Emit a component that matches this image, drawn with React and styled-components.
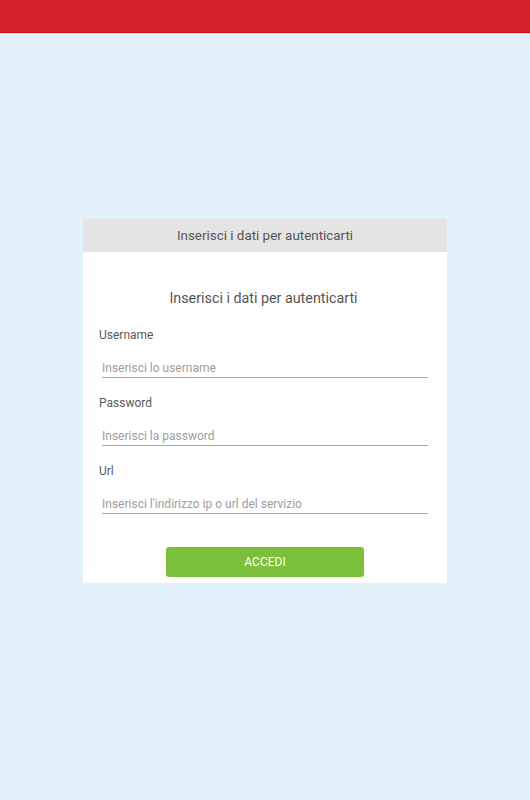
import React from "react";
import styled, { createGlobalStyle } from "styled-components";

const Global = createGlobalStyle`
  html, body { margin: 0; padding: 0; }
  body {
    background: #e3f1fb;
    font-family: Roboto, "Noto Sans", sans-serif;
  }
  * { box-sizing: border-box; }
`;

const Page = styled.div`
  min-height: 800px;
  display: flex;
  flex-direction: column;
`;

const TopBar = styled.header`
  height: 33px;
  background: #d52229;
  border-bottom: 1px solid #c80b10;
  box-shadow: 0 1px 0 #eee0e4;
`;

const Main = styled.main`
  display: flex;
  justify-content: center;
  padding-top: 186px;
`;

const Card = styled.section`
  width: 364px;
  background: #ffffff;
  display: flex;
  flex-direction: column;
`;

const CardHeader = styled.div`
  height: 33px;
  background: #e4e4e4;
  color: #555;
  font-size: 13.4px;
  display: flex;
  align-items: center;
  justify-content: center;
`;

const Form = styled.form`
  display: flex;
  flex-direction: column;
  padding: 37px 19px 6px 16px;
`;

const Title = styled.h2`
  margin: 0 0 21px;
  font-weight: 400;
  font-size: 14.3px;
  color: #555;
  text-align: center;
  line-height: 18px;
`;

const Field = styled.div`
  display: flex;
  flex-direction: column;
  & + & { margin-top: 18px; }
`;

const Label = styled.label`
  font-size: 12px;
  color: #5a5a5a;
  line-height: 15px;
  margin-bottom: 18px;
`;

const Input = styled.input`
  margin-left: 3px;
  border: none;
  border-bottom: 1px solid #a6a6a6;
  background: transparent;
  font-family: inherit;
  font-size: 12px;
  padding: 0 0 2px 0;
  height: 17px;
  outline: none;
  color: #333;
  &::placeholder { color: #9e9e9e; }
`;

const Actions = styled.div`
  display: flex;
  justify-content: center;
  margin-top: 33px;
  padding-left: 3px;
`;

const Button = styled.button`
  width: 198px;
  height: 30px;
  border: none;
  border-radius: 3px;
  background: #7cbf3a;
  color: #fff;
  font-family: inherit;
  font-size: 12px;
  cursor: pointer;
`;

export default function App() {
  return (
    <Page>
      <Global />
      <TopBar />
      <Main>
        <Card>
          <CardHeader>Inserisci i dati per autenticarti</CardHeader>
          <Form onSubmit={(e) => e.preventDefault()}>
            <Title>Inserisci i dati per autenticarti</Title>
            <Field>
              <Label>Username</Label>
              <Input placeholder="Inserisci lo username" />
            </Field>
            <Field>
              <Label>Password</Label>
              <Input type="password" placeholder="Inserisci la password" />
            </Field>
            <Field>
              <Label>Url</Label>
              <Input placeholder="Inserisci l'indirizzo ip o url del servizio" />
            </Field>
            <Actions>
              <Button type="submit">ACCEDI</Button>
            </Actions>
          </Form>
        </Card>
      </Main>
    </Page>
  );
}
